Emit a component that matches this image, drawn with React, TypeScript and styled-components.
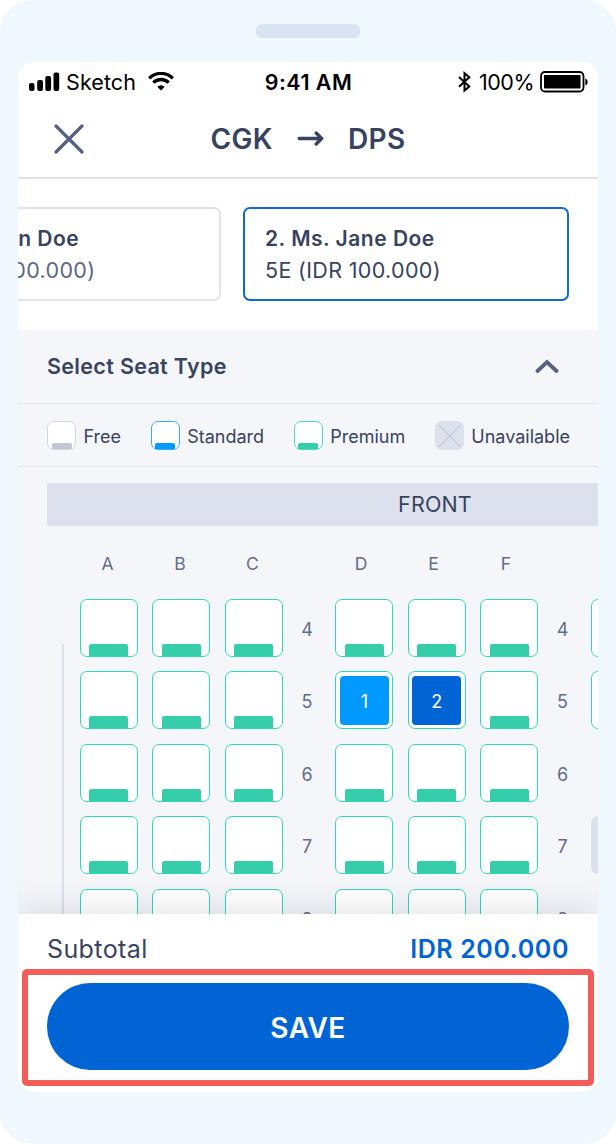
import React from 'react';
import styled, { createGlobalStyle } from 'styled-components';

const GlobalStyle = createGlobalStyle`
  *, *::before, *::after { box-sizing: border-box; }
  body {
    margin: 0;
    background: #fff;
    font-family: Inter, "Liberation Sans", sans-serif;
    color: #38435f;
  }
  button { font: inherit; border: 0; padding: 0; background: none; color: inherit; }
  svg { display: block; flex: none; }
`;

const Device = styled.div`
  width: 616px;
  height: 1144px;
  padding: 24px 18px 52px;
  border-radius: 32px;
  background: #f0f8ff;
  display: flex;
  flex-direction: column;
  align-items: center;
`;

const Speaker = styled.div`
  width: 104px;
  height: 14px;
  flex: none;
  margin-bottom: 24px;
  border-radius: 6px;
  background: #d9e4f2;
`;

const Screen = styled.main`
  width: 580px;
  height: 1030px;
  flex: none;
  display: flex;
  flex-direction: column;
  overflow: hidden;
  border-radius: 16px;
  background: #fff;
`;

const StatusBar = styled.div`
  height: 38px;
  flex: none;
  display: grid;
  grid-template-columns: 1fr auto 1fr;
  align-items: center;
  padding: 0 10px 0 11px;
  color: #000;
  font-size: 21.5px;
  line-height: 38px;
`;

const StatusGroup = styled.div<{ $end?: boolean }>`
  display: flex;
  align-items: center;
  justify-content: ${(p) => (p.$end ? 'flex-end' : 'flex-start')};
`;

const Carrier = styled.span`
  margin: 0 12px 0 6px;
  letter-spacing: 0.1px;
`;

const Clock = styled.span`
  padding-top: 1px;
  font-weight: 600;
  letter-spacing: 0.45px;
`;

const Charge = styled.span`
  margin: 0 6px 0 8px;
  letter-spacing: -0.5px;
`;

const TitleBar = styled.header`
  height: 79px;
  flex: none;
  display: grid;
  grid-template-columns: 100px 1fr 100px;
  align-items: center;
  border-bottom: 2px solid #dfe2ee;
`;

const CloseButton = styled.button`
  width: 32px;
  height: 32px;
  margin-left: 35px;
`;

const Route = styled.h1`
  margin: 1px 0 0;
  display: flex;
  align-items: center;
  justify-content: center;
  gap: 24px;
  font-size: 28px;
  line-height: 40px;
  font-weight: 600;
  letter-spacing: 0.4px;
`;

const Passengers = styled.section`
  height: 151px;
  flex: none;
  display: flex;
  justify-content: flex-end;
  gap: 22px;
  padding: 28px 29px 0 0;
`;

const PassengerCard = styled.div<{ $active?: boolean }>`
  width: 326px;
  height: 94px;
  flex: none;
  padding: 17px 20px;
  border: 2px solid ${(p) => (p.$active ? '#0f6bd4' : '#dfe2f0')};
  border-radius: 7px;
  color: ${(p) => (p.$active ? '#38435f' : '#5d6786')};
`;

const PassengerName = styled.div`
  font-size: 21px;
  line-height: 26px;
  font-weight: 600;
  letter-spacing: 0.5px;
  color: #38435f;
`;

const PassengerSeat = styled.div`
  margin-top: 4px;
  font-size: 21.5px;
  line-height: 28px;
  letter-spacing: 0.33px;
`;

const SectionHeader = styled.div`
  height: 74px;
  flex: none;
  display: flex;
  align-items: center;
  justify-content: space-between;
  padding: 0 39px 1px 29px;
  background: #f4f6fa;
  border-bottom: 1px solid #e2e4ee;
`;

const SectionTitle = styled.h2`
  margin: 0;
  font-size: 21.5px;
  line-height: 28px;
  font-weight: 600;
  letter-spacing: 0.33px;
`;

const Legend = styled.div`
  height: 63px;
  flex: none;
  display: flex;
  align-items: center;
  justify-content: space-between;
  padding: 0 28px 0 29px;
  background: #f4f6fa;
  border-bottom: 1px solid #e2e4ee;
`;

const LegendItem = styled.div`
  display: flex;
  align-items: center;
  gap: 7.5px;
  font-size: 18px;
  letter-spacing: 0;
`;

const LegendLabel = styled.span`
  padding-top: 3px;
  line-height: 24px;
`;

const Swatch = styled.div<{ $line: string; $fill: string }>`
  width: 29px;
  height: 29px;
  display: flex;
  align-items: flex-end;
  justify-content: center;
  border: 1px solid ${(p) => p.$line};
  border-radius: 7px;
  background: #fff;

  &::after {
    content: '';
    width: 20px;
    height: 6px;
    border-radius: 2px 2px 0 0;
    background: ${(p) => p.$fill};
  }
`;

const Cabin = styled.section`
  height: 447px;
  flex: none;
  overflow: hidden;
  padding: 16px 0 0 29px;
  background: #f4f6fa;
`;

const FrontBar = styled.div`
  width: 776px;
  height: 43px;
  background: #dde1ed;
  font-size: 21.5px;
  line-height: 43px;
  text-align: center;
  letter-spacing: 0.15px;
`;

const SeatRow = styled.div`
  display: flex;
  height: 58px;
  margin-bottom: 14.5px;
`;

const ColumnLetters = styled(SeatRow)`
  height: 24px;
  margin: 26px 0 22.8px 32px;
`;

const SeatGroup = styled.div`
  width: 203px;
  flex: none;
  display: flex;
  gap: 14.5px;
`;

const Letter = styled.span`
  width: 58px;
  padding-right: 1px;
  color: #626c8a;
  font-size: 17.5px;
  line-height: 24px;
  text-align: center;
`;

const Aisle = styled.span`
  width: 50.5px;
  flex: none;
`;

const RowNumber = styled.span`
  width: 52.5px;
  flex: none;
  padding-right: 4px;
  color: #626c8a;
  font-size: 18px;
  line-height: 61px;
  text-align: center;
`;

const SeatPlan = styled.div`
  display: flex;
  padding-left: 15px;
`;

const CabinWall = styled.div`
  width: 2px;
  flex: none;
  margin: 45px 15.8px 0 0;
  background: #dde0ea;
`;

const Seat = styled.div<{ $taken?: boolean }>`
  width: 58px;
  height: 58px;
  flex: none;
  display: flex;
  align-items: ${(p) => (p.$taken ? 'center' : 'flex-end')};
  justify-content: center;
  border: 1px solid #2edab5;
  border-radius: 7px;
  background: #fff;
`;

const Cushion = styled.div`
  width: 39px;
  height: 12px;
  border-radius: 2px 2px 0 0;
  background: #35cdaa;
`;

const Pick = styled.div<{ $current: boolean }>`
  width: 49px;
  height: 49px;
  border-radius: 4px;
  background: ${(p) => (p.$current ? '#0064d4' : '#0099ff')};
  color: #fff;
  font-size: 18px;
  line-height: 51px;
  text-align: center;
`;

const BlockedSeat = styled.div`
  width: 58px;
  height: 58px;
  border-radius: 7px;
  background: #dde1ed;
`;

const Footer = styled.footer`
  position: relative;
  height: 178px;
  flex: none;
  display: flex;
  flex-direction: column;
  align-items: center;
  background: #fff;
  box-shadow: 0 0 36px rgba(40, 44, 60, 0.16);
`;

const Total = styled.div`
  width: 522px;
  height: 55px;
  flex: none;
  display: flex;
  align-items: center;
  justify-content: space-between;
  padding-top: 15px;
  font-size: 25px;
  line-height: 32px;
  letter-spacing: 0.4px;
`;

const Amount = styled.strong`
  color: #0064d2;
  font-weight: 600;
  letter-spacing: 0.6px;
`;

const Highlight = styled.div`
  width: 572px;
  height: 117px;
  padding: 8px 19px;
  border: 6px solid #f25c59;
  border-radius: 5px;
`;

const SaveButton = styled.button`
  display: block;
  width: 522px;
  height: 87px;
  border-radius: 44px;
  background: #0064d4;
  color: #fff;
  font-size: 28px;
  line-height: 90px;
  font-weight: 600;
  letter-spacing: 0.5px;
`;

type SeatState = 'open' | 'blocked' | 'none' | number;

const open3: SeatState[] = ['open', 'open', 'open'];
const rows: { no: number; groups: SeatState[][] }[] = [
  { no: 4, groups: [open3, open3, ['open']] },
  { no: 5, groups: [open3, [1, 2, 'open'], ['open']] },
  { no: 6, groups: [open3, open3, ['none']] },
  { no: 7, groups: [open3, open3, ['blocked']] },
  { no: 8, groups: [open3, open3, ['none']] },
];

function SeatCell({ state }: { state: SeatState }) {
  if (state === 'none') return null;
  if (state === 'blocked') return <BlockedSeat />;
  if (state === 'open') return <Seat><Cushion /></Seat>;
  return <Seat $taken><Pick $current={state === 2}>{state}</Pick></Seat>;
}

function SignalIcon() {
  return (
    <svg width="31" height="19" viewBox="0 0 31 19">
      <rect x="0" y="11" width="5.5" height="8" rx="2" />
      <rect x="8.2" y="8" width="5.8" height="11" rx="2" />
      <rect x="16.3" y="4" width="5.8" height="15" rx="2" />
      <rect x="24.5" y="0.5" width="5.7" height="18.5" rx="2" />
    </svg>
  );
}

function WifiIcon() {
  return (
    <svg width="26" height="19" viewBox="0 0 26 19">
      <g fill="none" stroke="#000" strokeWidth="3.3">
        <path d="M1.2 6.3a16.7 16.7 0 0 1 23.6 0" />
        <path d="M5.3 10.700a10.9 10.9 0 0 1 15.4 0" />
      </g>
      <path d="M9.300 14.700a5.800 5.800 0 0 1 7.400 0L13 18.500z" />
    </svg>
  );
}

function BluetoothIcon() {
  return (
    <svg width="13" height="22" viewBox="0 0 13 22" fill="none" stroke="#000" strokeWidth="2">
      <path d="M1 6l10.3 9.500-4.800 4V2.200l4.800 4L1 15.700" />
    </svg>
  );
}

function BatteryIcon() {
  return (
    <svg width="48" height="22" viewBox="0 0 48 22">
      <rect x="1" y="1" width="42.5" height="19.5" rx="4" fill="none" stroke="#000" strokeWidth="1.8" />
      <rect x="4" y="4" width="36.5" height="13.5" rx="0.8" />
      <path d="M45.400 7.500c3 1.300 3 5.700 0 7z" />
    </svg>
  );
}

function CloseIcon() {
  return (
    <svg width="32" height="32" viewBox="0 0 32 32" fill="none" stroke="#566080" strokeWidth="3.2" strokeLinecap="round">
      <path d="M3 3l26 26M29 3L3 29" />
    </svg>
  );
}

function ArrowIcon() {
  return (
    <svg width="27" height="18" viewBox="0 0 27 18" fill="none" stroke="#38435f" strokeWidth="3.4" strokeLinecap="round" strokeLinejoin="round">
      <path d="M2.200 8.500h22M19.200 3L24.700 8.500l-5.500 5.500" />
    </svg>
  );
}

function ChevronUpIcon() {
  return (
    <svg width="24" height="16" viewBox="0 0 24 16" fill="none" stroke="#566080" strokeWidth="3.8">
      <path d="M2.500 13L12 4l9.500 9" strokeLinecap="round" />
    </svg>
  );
}

function BlockedIcon() {
  return (
    <svg width="29" height="29" viewBox="0 0 29 29">
      <rect width="29" height="29" rx="7" fill="#dde1ed" />
      <path d="M4 4l21.500 22M25.500 4L4 26" stroke="#c9cdd9" strokeWidth="1.5" />
    </svg>
  );
}

export default function App() {
  return (
    <Device>
      <GlobalStyle />
      <Speaker />
      <Screen>
        <StatusBar>
          <StatusGroup>
            <SignalIcon />
            <Carrier>Sketch</Carrier>
            <WifiIcon />
          </StatusGroup>
          <Clock>9:41 AM</Clock>
          <StatusGroup $end>
            <BluetoothIcon />
            <Charge>100%</Charge>
            <BatteryIcon />
          </StatusGroup>
        </StatusBar>
        <TitleBar>
          <CloseButton aria-label="Close"><CloseIcon /></CloseButton>
          <Route>
            <span>CGK</span>
            <ArrowIcon />
            <span>DPS</span>
          </Route>
        </TitleBar>
        <Passengers>
          <PassengerCard>
            <PassengerName>1. Mr. John Doe</PassengerName>
            <PassengerSeat>5D (IDR 100.000)</PassengerSeat>
          </PassengerCard>
          <PassengerCard $active>
            <PassengerName>2. Ms. Jane Doe</PassengerName>
            <PassengerSeat>5E (IDR 100.000)</PassengerSeat>
          </PassengerCard>
        </Passengers>
        <SectionHeader>
          <SectionTitle>Select Seat Type</SectionTitle>
          <ChevronUpIcon />
        </SectionHeader>
        <Legend>
          <LegendItem>
            <Swatch $line="#d3d6e3" $fill="#c3c6d3" />
            <LegendLabel>Free</LegendLabel>
          </LegendItem>
          <LegendItem>
            <Swatch $line="#37aaff" $fill="#0099ff" />
            <LegendLabel>Standard</LegendLabel>
          </LegendItem>
          <LegendItem>
            <Swatch $line="#4bdcbd" $fill="#35cdaa" />
            <LegendLabel>Premium</LegendLabel>
          </LegendItem>
          <LegendItem>
            <BlockedIcon />
            <LegendLabel>Unavailable</LegendLabel>
          </LegendItem>
        </Legend>
        <Cabin>
          <FrontBar>FRONT</FrontBar>
          <ColumnLetters>
            <SeatGroup>{['A', 'B', 'C'].map((l) => <Letter key={l}>{l}</Letter>)}</SeatGroup>
            <Aisle />
            <SeatGroup>{['D', 'E', 'F'].map((l) => <Letter key={l}>{l}</Letter>)}</SeatGroup>
          </ColumnLetters>
          <SeatPlan>
            <CabinWall />
            <div>
              {rows.map(({ no, groups }) => (
                <SeatRow key={no}>
                  {groups.map((group, g) => (
                    <React.Fragment key={g}>
                      {g > 0 && <RowNumber>{no}</RowNumber>}
                      <SeatGroup>
                        {group.map((state, i) => <SeatCell key={i} state={state} />)}
                      </SeatGroup>
                    </React.Fragment>
                  ))}
                </SeatRow>
              ))}
            </div>
          </SeatPlan>
        </Cabin>
        <Footer>
          <Total>
            <span>Subtotal</span>
            <Amount>IDR 200.000</Amount>
          </Total>
          <Highlight>
            <SaveButton>SAVE</SaveButton>
          </Highlight>
        </Footer>
      </Screen>
    </Device>
  );
}
